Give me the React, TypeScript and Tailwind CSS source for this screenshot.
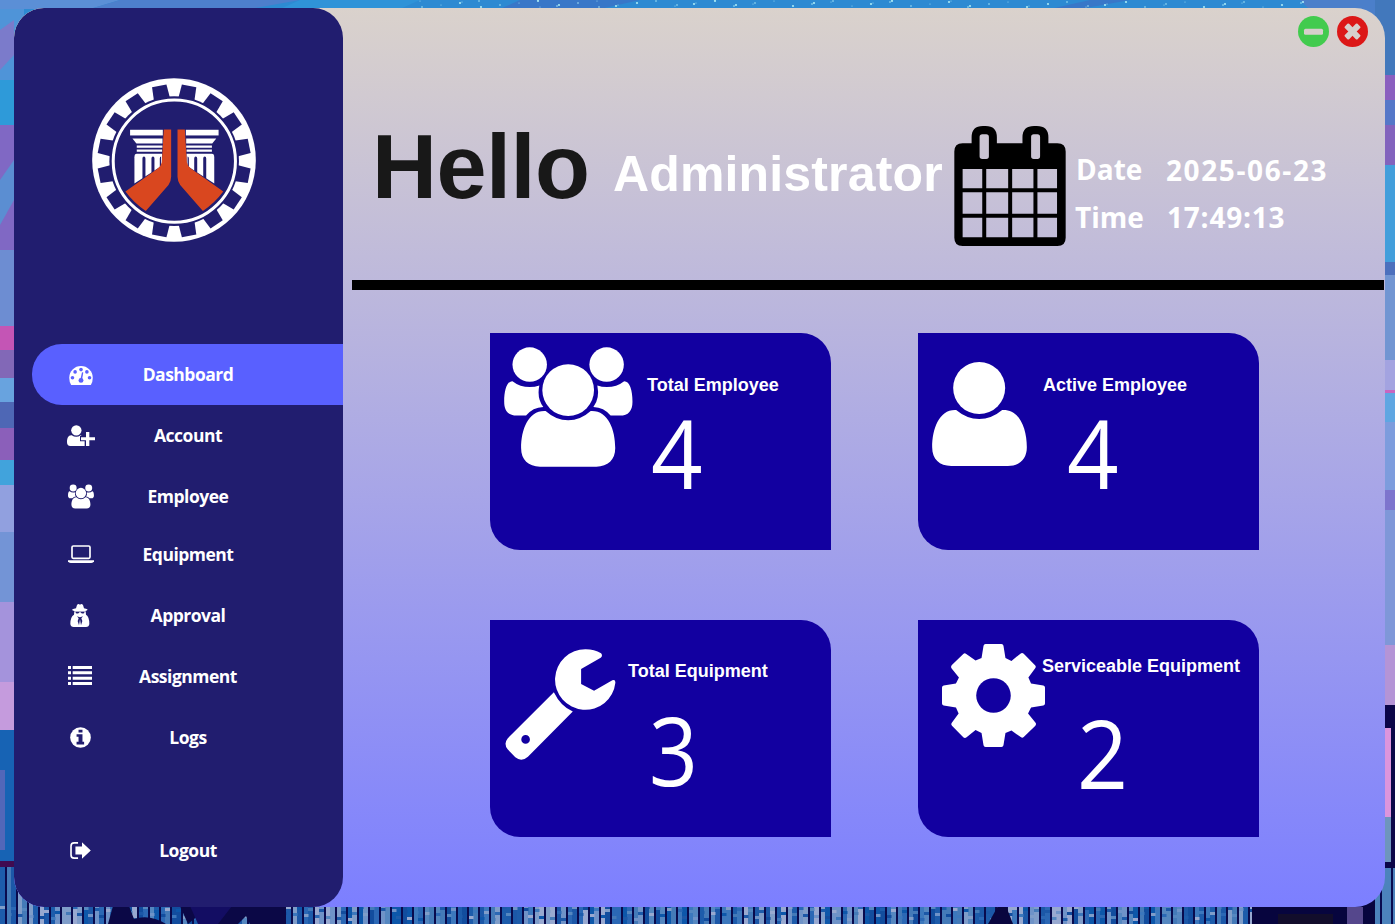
import React from 'react';

const SEGOE = "font-['Open_Sans','Noto_Sans',sans-serif]";

function TeamIcon({ className }: { className: string }) {
  const side =
    'M72 245C72 210 80 183 97 183Q120 201 149 201Q165 201 178 196Q170 235 190 261Q158 262 138 287H110C84 287 72 272 72 245Z';
  return (
    <svg viewBox="72 80 388 362" className={className} fill="currentColor">
      <circle cx="149" cy="133" r="52" />
      <circle cx="381" cy="133" r="52" />
      <path d={side} />
      <path d={side} transform="translate(531 0) scale(-1 1)" />
      <circle cx="265" cy="210" r="78" />
      <path d="M123 385C123 328 145 270 197 273Q228 301 265 301Q302 301 333 273C385 270 407 328 407 385C407 421 385 441 350 441H180C145 441 123 421 123 385Z" />
    </svg>
  );
}

function PersonIcon({ className }: { className: string }) {
  return (
    <svg viewBox="66 126 284 312" className={className} fill="currentColor">
      <circle cx="207" cy="204" r="78" />
      <path d="M66 382C66 325 88 267 138 270Q170 297 207 297Q244 297 276 270C328 267 350 325 350 382C350 418 328 438 293 438H123C88 438 66 418 66 382Z" />
    </svg>
  );
}

function WrenchIcon({ className }: { className: string }) {
  return (
    <svg viewBox="75 117 332 334" className={className} fill="currentColor">
      <path d="M363 130Q369 137 362 143L303 177V222L342 243L397 211Q407 208 406 219A91 91 0 1 1 317 118Q343 118 363 130Z" />
      <path
        fillRule="evenodd"
        d="M221 247Q242 290 278 305L143 441Q124 458 105 443L82 419Q69 402 82 386ZM123 389a13 13 0 1 0 26 0a13 13 0 1 0 -26 0Z"
      />
    </svg>
  );
}

function GearIcon({ className }: { className: string }) {
  const wedge =
    'M214 142L220 105Q221 100 226 100H274Q279 100 280 105L286 142L304 151L331 129Q336 125 341 129L375 164Q379 168 376 172L355 201L363 219L340 260H240Z';
  return (
    <svg viewBox="95 100 310 310" className={className} fill="currentColor">
      {[0, 90, 180, 270].map((a) => (
        <path key={a} d={wedge} transform={`rotate(${a} 250 255)`} />
      ))}
      <circle cx="250" cy="255" r="52" fill="#1200a0" />
    </svg>
  );
}

function CalendarIcon({ className }: { className: string }) {
  const cols = [[67, 59], [138, 66], [216, 64], [292, 59]];
  const rows = [[507, 58], [577, 65], [654, 59]];
  const cells = rows
    .map(([y, h]) => cols.map(([x, w]) => `M${x} ${y}h${w}v${h}h${-w}Z`).join(''))
    .join('');
  return (
    <svg viewBox="42 378 335 361" className={className} fill="currentColor">
      <path
        fillRule="evenodd"
        d={
          'M67 430H94V412Q94 378 128 378H136Q170 378 170 412V430H247V412Q247 378 282 378H290Q325 378 325 412V430H352Q377 430 377 455V714Q377 739 352 739H67Q42 739 42 714V455Q42 430 67 430Z' +
          'M126 403Q118 403 118 411V469Q118 477 126 477H138Q146 477 146 469V411Q146 403 138 403ZM281 403Q273 403 273 411V469Q273 477 281 477H292Q300 477 300 469V411Q300 403 292 403Z' +
          cells
        }
      />
    </svg>
  );
}

function Logo() {
  const notches = Array.from({ length: 16 }, (_, i) => 11.25 + i * 22.5);
  const half = (
    <>
      <rect x="150" y="193" width="98" height="17" />
      <path d="M157 219H247V234H169Z" />
      <path d="M170 240H247V247H170ZM170 252H246V259H170Z" />
      <path d="M170 265H246V300L163 354V275Q163 265 170 265Z" />
      <path
        fill="#211d6f"
        d="M187 279Q187 273 191.500 273T196 279V340H187ZM214 279Q214 273 218.500 273T223 279V322H214ZM239 279Q239 273 243 273V308H239Z"
      />
      <path
        fill="#d9471f"
        d="M251 192H273V334Q273 347 265 358L197 436Q162 413 136 378L232 310Q243 302 245 290Z"
      />
    </>
  );
  return (
    <svg viewBox="36 38 491 491" className="h-[164px] w-[164px]" fill="#fff">
      <circle cx="281.5" cy="283.5" r="245" />
      <g fill="#211d6f">
        {notches.map((a) => (
          <path key={a} d="M260 57H304L307 110H257Z" transform={`rotate(${a} 282 286)`} />
        ))}
        <circle cx="282" cy="287" r="194" />
      </g>
      <circle cx="282.5" cy="287" r="183" fill="none" stroke="#fff" strokeWidth="9" />
      <g>{half}</g>
      <g transform="translate(565 0) scale(-1 1)">{half}</g>
    </svg>
  );
}

const GaugeIcon = (
  <svg viewBox="207 107 72 58" className="mt-[2px] h-[19px] w-6" fill="#fff">
    <path d="M207 143A36 36 0 0 1 279 143Q279 155 273 165H213Q207 155 207 143Z" />
    <g fill="#5960ff">
      <circle cx="217" cy="143" r="5.5" />
      <circle cx="225" cy="125" r="5.5" />
      <circle cx="243" cy="118" r="5.5" />
      <circle cx="261" cy="125" r="5.5" />
      <circle cx="269" cy="143" r="5.5" />
      <circle cx="243" cy="151" r="7.5" />
      <path d="M246 126L250 127L246 150L241 149Z" />
    </g>
  </svg>
);

const AddUserIcon = (
  <svg viewBox="201 285 84 63" className="h-[21px] w-7" fill="#fff">
    <circle cx="229" cy="301" r="15.5" />
    <path d="M201 337C201 324 205 315 215 316Q229 325 242 316L245 318H240V334H254V348H211Q201 348 201 337Z" />
    <path d="M258 306H268V322H285V331H268V348H258V331H243V322H258Z" />
  </svg>
);

const LaptopIcon = (
  <svg viewBox="204 645 78 54" className="mb-[1px] h-[18px] w-[26px]" fill="#fff">
    <rect x="216" y="648" width="54" height="37" rx="4" fill="none" stroke="#fff" strokeWidth="5" />
    <path d="M204 691H282V694Q280 699 274 699H212Q206 699 204 694Z" />
  </svg>
);

const AgentIcon = (
  <svg viewBox="209 102 60 69" className="mr-[2px] h-[23px] w-5" fill="#fff">
    <path d="M227 115L230 105Q234 100 239 104Q244 100 248 105L251 115Q262 117 262 119Q259 124 239 124Q217 124 215 119Q216 117 227 115Z" />
    <path
      fillRule="evenodd"
      d="M222 124H256L257 134Q267 139 267 162Q266 171 257 171H220Q211 171 210 162Q210 140 221 134ZM226 125V129Q234 133 237 127H241Q244 133 252 129V125ZM230 139L235 145L232 153L236 166L239 148L242 166L246 153L243 145L248 139L244 140L239 142L234 140Z"
    />
  </svg>
);

const ListIcon = (
  <svg viewBox="204 288 72 57" className="mr-[2px] mb-[2px] h-[19px] w-6" fill="#fff">
    {[288, 304, 320, 336].map((y) => (
      <path key={y} d={`M204 ${y}h9v9h-9ZM218 ${y}h58v9h-58Z`} />
    ))}
  </svg>
);

const InfoIcon = (
  <svg viewBox="209 470 64 64" className="mr-[1px] h-[21px] w-[21px]" fill="#fff">
    <circle cx="241" cy="502" r="31.5" />
    <path d="M235 478H247V487H235ZM229 492H247V515H252V523H229V515H235V500H229Z" fill="#211d6f" />
  </svg>
);

const LogoutIcon = (
  <svg viewBox="210 815 63 52" className="mr-[1px] h-[17px] w-[21px]" fill="#fff">
    <path d="M234 817.500H222Q212.500 817.500 212.500 827V855Q212.500 864.500 222 864.500H234" fill="none" stroke="#fff" strokeWidth="5" />
    <path d="M226 829H246V816L273 841L246 866V853H226Z" />
  </svg>
);

type NavItem = { label: string; icon: React.ReactNode; extra: string };

const nav: NavItem[] = [
  { label: 'Dashboard', icon: GaugeIcon, extra: 'bg-[#5960ff]' },
  { label: 'Account', icon: AddUserIcon, extra: '' },
  { label: 'Employee', icon: <TeamIcon className="h-[25px] w-[26px] text-white" />, extra: '' },
  { label: 'Equipment', icon: LaptopIcon, extra: '-mt-[3px]' },
  { label: 'Approval', icon: AgentIcon, extra: '' },
  { label: 'Assignment', icon: ListIcon, extra: '' },
  { label: 'Logs', icon: InfoIcon, extra: '' },
  { label: 'Logout', icon: LogoutIcon, extra: 'mt-[52px]' },
];

function Sidebar() {
  return (
    <aside className="flex h-full w-[329px] shrink-0 flex-col rounded-[30px] bg-[#211d6f] pt-[70px]">
      <div className="ml-[78px]">
        <Logo />
      </div>
      <nav className="mt-[102px] flex flex-col pl-[18px]">
        {nav.map((n) => (
          <button
            key={n.label}
            className={`flex h-[61px] items-center rounded-l-[30px] ${n.extra}`}
          >
            <span className="ml-[32px] flex w-[34px] justify-center">{n.icon}</span>
            <span
              className={`ml-[20px] w-[140px] text-center text-[17.5px] font-bold tracking-[-0.5px] text-white ${SEGOE}`}
            >
              {n.label}
            </span>
          </button>
        ))}
      </nav>
    </aside>
  );
}

type CardProps = {
  icon: React.ReactNode;
  iconBox: string;
  label: string;
  column: string;
  value: string;
  valueBox: string;
};

function StatCard({ icon, iconBox, label, column, value, valueBox }: CardProps) {
  return (
    <section className="flex h-[217px] w-[341px] items-start rounded-tr-[30px] rounded-bl-[30px] bg-[#1200a0] text-white">
      <div className={`shrink-0 ${iconBox}`}>{icon}</div>
      <div className={`flex flex-col ${column}`}>
        <h2 className="font-['Liberation_Sans',sans-serif] text-[18px] leading-6 font-bold whitespace-nowrap">
          {label}
        </h2>
        <p className={`origin-left text-[95px] leading-[96px] ${SEGOE} ${valueBox}`}>{value}</p>
      </div>
    </section>
  );
}

function WindowButtons() {
  return (
    <div className="flex h-[31px] justify-end gap-2 pr-[17px]">
      <svg viewBox="0 0 31 31" className="h-[31px] w-[31px]">
        <circle cx="15.500" cy="15.500" r="15.500" fill="#42cb4e" />
        <rect x="6" y="12.700" width="19" height="6" rx="1.500" fill="#d7cfcc" />
      </svg>
      <svg viewBox="0 0 31 31" className="h-[31px] w-[31px]">
        <circle cx="15.500" cy="15.500" r="15.500" fill="#dc1717" />
        <g fill="#d7cfcc" transform="rotate(45 15.500 15.500)">
          <rect x="6.500" y="12.500" width="18" height="6" rx="1.200" />
          <rect x="12.500" y="6.500" width="6" height="18" rx="1.200" />
        </g>
      </svg>
    </div>
  );
}

const buildingColors = ['#1d5cab', '#5587c0', '#2b68b5', '#7f9dc9', '#3c78bd', '#124d9e', '#6f93c8', '#1c58a8', '#447ab8', '#0d57aa', '#98a9d0'];

const leftStrip: [number, number, string][] = [
  [9, 80, '#4f94d8'], [80, 125, '#2e9ad9'], [125, 250, '#8068c4'], [250, 330, '#6d8dd2'],
  [326, 350, '#c455b5'], [350, 378, '#8268b7'], [378, 402, '#68a3df'], [402, 428, '#4e67b5'],
  [428, 460, '#8b5fba'], [460, 485, '#41a3dc'], [485, 532, '#91a0df'], [532, 602, '#7394d6'],
  [602, 682, '#a493dc'], [682, 730, '#c59bdd'], [730, 862, '#1763b4'],
];

const rightStrip: [number, number, string][] = [
  [0, 75, '#4278bc'], [75, 100, '#8a5fbf'], [100, 125, '#5577c8'], [125, 165, '#8263bd'],
  [165, 262, '#429edb'], [262, 275, '#4c70bd'], [275, 360, '#7195d2'], [360, 390, '#a3a3e0'],
  [390, 393, '#c866c0'], [393, 422, '#5fa6e2'], [422, 490, '#7d9cdd'], [490, 510, '#7d74cd'],
  [510, 645, '#7f97d8'], [645, 705, '#b494d6'], [705, 728, '#0b0648'], [728, 817, '#dc95dc'],
  [817, 862, '#6e95bd'], [862, 868, '#0b0648'], [868, 924, '#4c83bc'],
];

function Wallpaper() {
  const bars = Array.from({ length: 254 }, (_, i) => i);
  return (
    <svg viewBox="0 0 1395 924" className="absolute inset-0 h-full w-full">
      <rect width="1395" height="924" fill="#2d8ad2" />
      <path d="M0 0H120L90 9H0Z" fill="#5b8fd6" />
      <path d="M120 0H300L250 9H90Z" fill="#4d7fcc" />
      <path d="M300 0H420L400 9H280Z" fill="#2f93d8" />
      <path d="M520 0H640L600 9H500ZM1090 0H1130L1080 9H1050Z" fill="#3877c8" />
      <path d="M1300 0H1395V40H1340Z" fill="#4b7fca" />
      {bars.slice(0, 70).map((i) => (
        <circle key={i} cx={420 + ((i * 137) % 900)} cy={1 + ((i * 5) % 7)} r={0.5 + (i % 3) * 0.3} fill="#a7e9f5" />
      ))}
      {leftStrip.map(([a, b, c]) => (
        <rect key={a} y={a} width="24" height={b - a} fill={c} />
      ))}
      <path d="M0 30L14 20V55L0 70Z" fill="#7b7bcb" />
      <path d="M0 180L14 160V200L0 225Z" fill="#5b8ed2" />
      <path d="M0 770H5V850H0Z" fill="#5267b9" />
      {bars.map((i) => (
        <rect key={i} x={i * 5.5} y="866" width="6" height="58" fill={buildingColors[(i * 7 + (i >> 2) + ((i * i) % 5)) % 11]} />
      ))}
      {bars.map((i) => (
        <rect key={i} x={i * 5.5} y={906 + ((i * 7) % 13)} width="6" height="3" fill={buildingColors[(i * 5 + 3) % 11]} />
      ))}
      {rightStrip.map(([a, b, c]) => (
        <rect key={a} x="1375" y={a} width="20" height={b - a} fill={c} />
      ))}
      {bars.slice(0, 127).map((i) => (
        <rect key={i} x={i * 11 + 5} y="862" width="2" height="62" fill="#090b4e" />
      ))}
      <rect y="861" width="15" height="6" fill="#400b50" />
      <path d="M108 924L113 906H129L134 919Q150 914 166 924ZM180 906H286V924H250L246 916L238 924H212L200 914L188 924Z" fill="#0b0846" />
      <path d="M190 906H232L218 924H198Z" fill="#130d63" />
      <path d="M988 924L998 906H1006L1013 924Z" fill="#09063f" />
      <path d="M1252 890H1375V924H1252Z" fill="#07053e" />
      <path d="M1391 715H1395V868H1391Z" fill="#0b0648" />
      <rect x="1278" y="914" width="55" height="10" fill="#120d2b" />
      <rect x="1347" y="907" width="16" height="17" fill="#55478c" />
    </svg>
  );
}

export default function App() {
  return (
    <div className="relative h-[924px] w-full overflow-hidden">
      <Wallpaper />
      <div className="relative h-full w-full pt-2 pr-[10px] pb-[17px] pl-[14px]">
        <div className="flex h-full w-full overflow-hidden rounded-[30px] bg-[linear-gradient(to_bottom,#dad2cc,#7c7fff)]">
          <Sidebar />
          <main className="flex min-w-0 flex-1 flex-col pt-[7.5px]">
            <WindowButtons />
            <header className="flex h-[233.5px] items-start pl-[29px]">
              <h1 className="mt-[75.5px] w-[241px] font-['Liberation_Sans',sans-serif] text-[90px] leading-[90px] font-bold tracking-[-0.5px] text-[#181818]">
                Hello
              </h1>
              <p className="mt-[102.5px] w-[341px] font-['Liberation_Sans',sans-serif] text-[50px] leading-[50px] font-bold tracking-[0.15px] text-white">
                Administrator
              </p>
              <CalendarIcon className="mt-[79.5px] h-[120px] w-[112px] shrink-0 text-black" />
              <dl className={`mt-[98.5px] ml-[9px] grid grid-cols-[91px_auto] text-[28px] leading-[48px] font-bold text-white ${SEGOE}`}>
                <dt className="pl-[1px]">Date</dt>
                <dd className="-mb-[2px] pt-[1px] tracking-[1.6px]">2025-06-23</dd>
                <dt>Time</dt>
                <dd className="pl-[1px] tracking-[0.8px]">17:49:13</dd>
              </dl>
            </header>
            <hr className="ml-[9px] mr-px h-[10px] border-0 bg-black" />
            <div className="mt-[43px] ml-[147px] grid grid-cols-[341px_341px] gap-x-[87px] gap-y-[70px]">
              <StatCard
                icon={<TeamIcon className="h-[120px] w-[129px]" />}
                iconBox="pt-[14px] pl-[14px]"
                label="Total Employee"
                column="pt-[40px] pl-[14px]"
                value="4"
                valueBox="mt-[7px] ml-[4px] scale-x-[0.95]"
              />
              <StatCard
                icon={<PersonIcon className="h-[104px] w-[95px]" />}
                iconBox="pt-[29px] pl-[14px]"
                label="Active Employee"
                column="pt-[40px] pl-[16px]"
                value="4"
                valueBox="mt-[7px] ml-[24px] scale-x-[0.95]"
              />
              <StatCard
                icon={<WrenchIcon className="h-[111px] w-[111px]" />}
                iconBox="pt-[29px] pl-[15px]"
                label="Total Equipment"
                column="pt-[39px] pl-[12px]"
                value="3"
                valueBox="mt-[18px] ml-[21px] scale-x-[0.9]"
              />
              <StatCard
                icon={<GearIcon className="h-[103px] w-[103px]" />}
                iconBox="pt-[24px] pl-[24px]"
                label="Serviceable Equipment"
                column="pt-[34px] -ml-[3px]"
                value="2"
                valueBox="mt-[26px] ml-[35px] scale-x-[0.94]"
              />
            </div>
          </main>
        </div>
      </div>
    </div>
  );
}
